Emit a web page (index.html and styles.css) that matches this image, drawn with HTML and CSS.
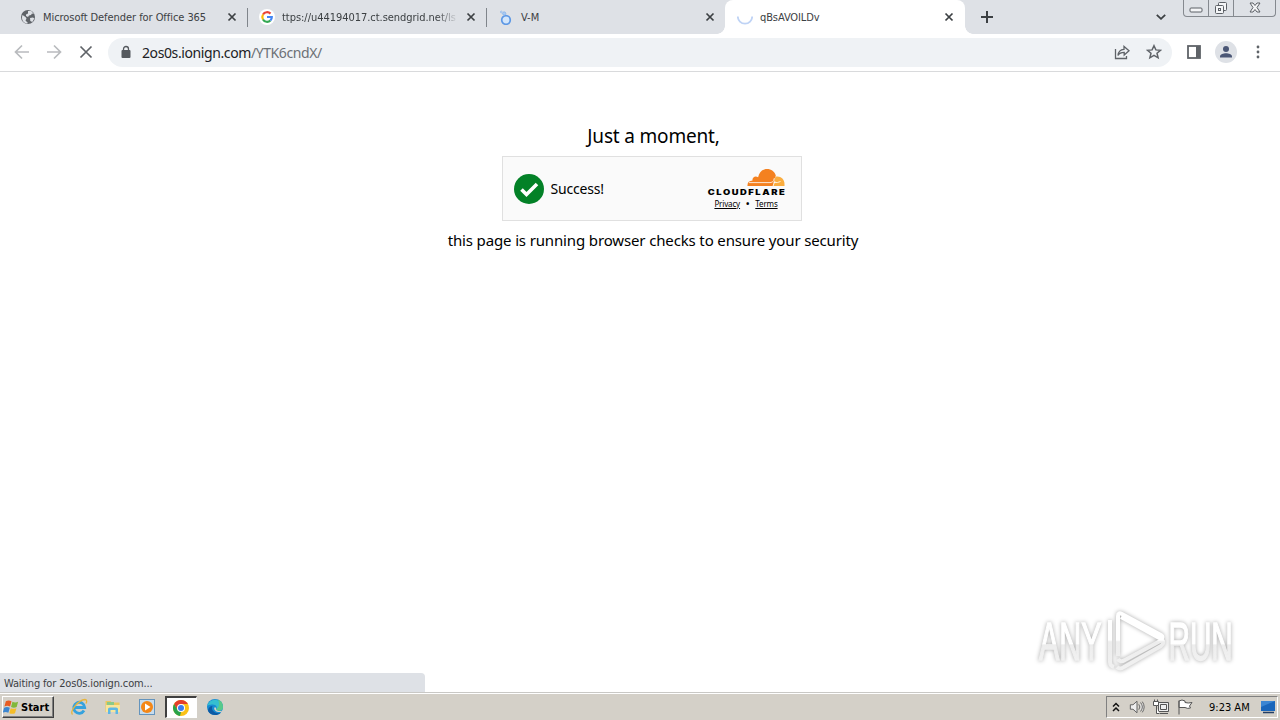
FILE: index.html
```html
<!DOCTYPE html>
<html lang="en">
<head>
  <meta charset="UTF-8" />
  <meta name="viewport" content="width=device-width, initial-scale=1.0" />
  <title>qBsAVOILDv</title>
  <link rel="stylesheet" href="styles.css">
</head>
<body>
  <header class="tab-strip">
    <div class="tab first">
      <svg class="favicon" viewBox="0 0 16 16"><circle cx="8" cy="8" r="7" fill="#5f6368"/><path d="M2.500 6l3 2 1 1.500-1 2L8 14l-1 .6C3 14 1 10 2.500 6zM8 2l3-.3 3 3.300-2-.5-1 1.500-2 .5-1 1.500-2-1 0-1.500 2-1zM10 9l3-.5 1.300 1-2 3.500-2-1z" fill="#dee1e6"/></svg>
      <span class="tab-title t1">Microsoft Defender for Office 365</span>
      <svg class="close" viewBox="0 0 10 10"><path d="M1.500 1.500l7 7M8.500 1.500l-7 7"/></svg>
    </div>
    <div class="tab">
      <svg class="favicon" viewBox="0 0 16 16"><circle cx="8" cy="8" r="8" fill="#fff"/><g fill="none" stroke-width="2.200"><path d="M4 5.500A4.800 4.800 0 0 1 11.500 4.600" stroke="#ea4335"/><path d="M4 5.500a5 5 0 0 0 0 5" stroke="#fbbc05"/><path d="M4 10.500a4.800 4.800 0 0 0 7.400 1" stroke="#34a853"/><path d="M11.400 11.500A5 5 0 0 0 12.800 8H8" stroke="#4285f4"/></g></svg>
      <span class="tab-title t2">ttps://u44194017.ct.sendgrid.net/ls</span>
      <svg class="close" viewBox="0 0 10 10"><path d="M1.500 1.500l7 7M8.500 1.500l-7 7"/></svg>
    </div>
    <div class="tab third">
      <svg class="favicon" viewBox="0 0 16 16" fill="none" stroke="#5d98e5"><circle cx="8" cy="11" r="4.300" fill="#d3e6fb" stroke-width="1.700"/><circle cx="6.200" cy="4.500" r="1.600" fill="#a9cbf4" stroke="#8db8ee"/><circle cx="3.300" cy="3" r=".9" stroke="#98bff0"/></svg>
      <span class="tab-title t3">V-M</span>
      <svg class="close" viewBox="0 0 10 10"><path d="M1.500 1.500l7 7M8.500 1.500l-7 7"/></svg>
    </div>
    <div class="tab active">
      <svg class="favicon" viewBox="0 0 16 16"><path d="M.8 7.500a7.200 7.200 0 0 0 14.400 0" fill="none" stroke="#bfd3f5" stroke-width="1.800"/></svg>
      <span class="tab-title t4">qBsAVOILDv</span>
      <svg class="close" viewBox="0 0 10 10"><path d="M1.500 1.500l7 7M8.500 1.500l-7 7"/></svg>
    </div>
    <svg class="new-tab" viewBox="0 0 12 12"><path d="M6 0v12M0 6h12"/></svg>
    <svg class="tab-search" viewBox="0 0 10 6"><path d="M.8 .8L5 4.800 9.200 .8"/></svg>
    <div class="window-buttons">
      <span><svg width="14" height="6"><rect x="1" y="1" width="12" height="4" rx="1"/></svg></span>
      <span><svg width="14" height="14"><rect x="4.500" y="1.500" width="8" height="8" rx="1"/><rect x="1.500" y="4.500" width="8" height="8" rx="1"/><rect x="4.500" y="7.500" width="2" height="2"/></svg></span>
      <span><svg width="14" height="12"><path d="M2 1h3l2 2.500L9 1h3L9 5.500 12 10H9L7 7.500 5 10H2l3-4.500z"/></svg></span>
    </div>
  </header>

  <div class="toolbar">
    <svg class="nav-icon muted" viewBox="0 0 16 16"><path d="M15 8H2M8 1.500L1.500 8 8 14.500"/></svg>
    <svg class="nav-icon muted" viewBox="0 0 16 16"><path d="M1 8h13M8 1.500L14.500 8 8 14.500"/></svg>
    <svg class="nav-icon" viewBox="0 0 16 16"><path d="M2.500 2.500l11 11M13.500 2.500l-11 11"/></svg>
    <div class="omnibox">
      <svg class="lock" viewBox="0 0 10 14"><rect x=".5" y="5" width="9" height="8" rx="1" fill="#55595e"/><path d="M2.500 5.500V4a2.500 2.500 0 0 1 5 0v1.500" fill="none" stroke="#55595e" stroke-width="1.300"/></svg>
      <span class="url">2os0s.ionign.com<em>/YTK6cndX/</em></span>
      <svg class="share" viewBox="0 0 16 16"><path d="M1.500 5v9.500h11V12M4 11.500c.3-4 2.500-6 6-6.200V2.500L15 6.800 10.200 11V8.400c-3 0-4.900.8-6.200 3.100z"/></svg>
      <svg class="star" viewBox="0 0 16 16"><path d="M8 1.700l1.900 4.200 4.600.4-3.500 3 1.100 4.500L8 11.400l-4.100 2.400L5 9.300l-3.500-3 4.600-.4z"/></svg>
    </div>
    <svg class="side-panel" viewBox="0 0 14 14"><rect x="1" y="1" width="12" height="12" fill="none" stroke="#5f6368" stroke-width="1.800"/><path d="M9 1h4v12H9z" fill="#5f6368"/></svg>
    <svg class="avatar" viewBox="0 0 22 22"><circle cx="11" cy="11" r="11" fill="#dee1e6"/><circle cx="11" cy="8" r="3" fill="#4a5675"/><path d="M5 16.500v-1.200c0-2 3.500-3.100 6-3.100s6 1.100 6 3.100v1.200z" fill="#4a5675"/></svg>
    <svg class="menu" viewBox="0 0 4 14"><circle cx="2" cy="2" r="1.400"/><circle cx="2" cy="7" r="1.400"/><circle cx="2" cy="12" r="1.400"/></svg>
  </div>

  <main>
    <h1>Just a moment,</h1>
    <div class="challenge">
      <svg class="check" viewBox="0 0 30 30"><circle cx="15" cy="15" r="15" fill="#038127"/><path d="M7.500 15.500l5 5L23 10" fill="none" stroke="#fff" stroke-width="3.600"/></svg>
      <span class="success">Success!</span>
      <div class="brand">
        <svg class="cf-logo" viewBox="0 0 78 28">
          <path d="M40.500 17c-.3-3.500 1.700-5.500 5-5.600-.4-3.400 3-5 5.600-3.200C52.300 3 55.500 0 60 0c4.300 0 7.600 2.500 8.800 6.500L66 17z" fill="#f48120"/>
          <path d="M66 17l2.500-9.300c4.500-1.300 9 2 9 7.300v2z" fill="#faad3f"/>
          <path d="M42 13.600h21q3 0 3.600-2l.8-2.500M66.500 13.500h4l3-1M66 17l2-5" fill="none" stroke="#fff" stroke-width=".8"/>
          <text transform="translate(.8 25.700) scale(1.250 1)" textLength="61.500" lengthAdjust="spacing">CLOUDFLARE</text>
        </svg>
        <div class="links"><a>Privacy</a><b>•</b><a>Terms</a></div>
      </div>
    </div>
    <p>this page is running browser checks to ensure your security</p>
    <svg class="watermark" viewBox="0 0 220 80">
      <defs>
        <linearGradient id="fade" gradientUnits="userSpaceOnUse" x1="0" y1="10" x2="0" y2="70"><stop offset=".5" stop-color="#fff"/><stop offset=".53" stop-color="#ededed"/><stop offset="1" stop-color="#f1f1f1"/></linearGradient>
        <linearGradient id="text-fade" gradientUnits="userSpaceOnUse" x1="0" y1="-40" x2="0" y2="0"><stop offset=".6" stop-color="#fff"/><stop offset=".64" stop-color="#ededed"/><stop offset="1" stop-color="#f1f1f1"/></linearGradient>
      </defs>
      <g class="letters"><text transform="translate(8 59.500) scale(.575 1)">ANY</text><text transform="translate(137.500 59.500) scale(.56 1)">RUN</text></g>
      <path class="play" d="M87 56V16q0-4 4-2l39 21q3 2 0 4L90 17M79 20v42q0 4 4 5M86 67q3 3 7 0l37-21q4-3 1-6L94 60q-5 3-7-1"/>
    </svg>
    <div class="status">Waiting for 2os0s.ionign.com...</div>
  </main>

  <footer class="taskbar">
    <button class="start">
      <svg viewBox="0 0 18 16"><path d="M3 2q3-2 6 0L7.500 7.500q-3-1.500-6 0z" fill="#e85c23"/><path d="M10 2.500q3 1.500 6 0L14.500 8q-3 1.500-6 0z" fill="#81b83b"/><path d="M1.200 8.700q3-1.500 6 0L5.700 14q-3-1.500-6 0z" fill="#3c86d0"/><path d="M8.200 9.200q3 1.500 6 0L12.700 14.500q-3 1.500-6 0z" fill="#f5bd28"/></svg>
      <span>Start</span>
    </button>
    <div class="launch">
      <span><svg viewBox="0 0 18 18"><path d="M14 12.500A5.500 5.500 0 1 1 14.700 9.500H5" fill="none" stroke="#35a2de" stroke-width="2.800"/><path d="M2.500 16.500C-.5 13.500 8 2 15 1.500c2 0 2 2 1 4" fill="none" stroke="#e7b53c" stroke-width="1.300"/></svg></span>
      <span><svg viewBox="0 0 18 18"><path d="M1.500 3h5l1 1.500h8V14h-14z" fill="#ecc75d"/><path d="M3 4h7v5H3z" fill="#8bc989"/><path d="M2 7h14v7H2z" fill="#f8e59b"/><path d="M4 16V11q0-1.500 2-1.500h6q2 0 2 1.500v5h-2.500v-4h-5v4z" fill="#5db7e5"/></svg></span>
      <span><svg viewBox="0 0 18 18"><rect x="1.500" y="1.500" width="15" height="15" fill="#c7dced" stroke="#6494bd"/><circle cx="9" cy="9" r="6" fill="#f48717"/><path d="M7 5.500v7L12.500 9z" fill="#fff"/></svg></span>
      <span class="running"><svg viewBox="0 0 18 18"><circle cx="9" cy="9" r="8" fill="#fbc116"/><path d="M2.100 5A8 8 0 0 1 15.900 5H9L5.500 11z" fill="#e43e2b"/><path d="M2.100 5l3.500 6 3.400 2-1 4A8 8 0 0 1 2.100 5z" fill="#29a34a"/><circle cx="9" cy="9" r="4" fill="#fff"/><circle cx="9" cy="9" r="3" fill="#3b7ded"/></svg></span>
      <span><svg viewBox="0 0 18 18"><circle cx="9" cy="9" r="8" fill="#168bd2"/><path d="M1.200 8A8 8 0 0 1 17 9c0 4-5 4.500-7 2.500 2-2 0-5.500-4-5C3.500 6.800 2 7 1.200 8z" fill="#35bfd0"/><path d="M12 1.600A8 8 0 0 1 17 9c0 4-5 4.500-7 2.500 3-2 4-5 2-9.900z" fill="#58c98a"/><path d="M6.500 8c-2 4 2 8 8 7C11 18.500 4 17.500 2 13c0-3 2-5 4.500-5z" fill="#0c5aa5"/><path d="M10 11.500c2 2 5 2 6.500.7l-1 1.600C11 15 7 12 8.500 9.500c1-1 2 .5 1.500 2z" fill="#d4d0c8"/></svg></span>
    </div>
    <div class="tray">
      <svg class="up" viewBox="0 0 8 10"><path d="M1 4.500l3-3 3 3M1 9l3-3 3 3" fill="none" stroke="#111" stroke-width="1.500"/></svg>
      <svg class="tray-icon speaker" viewBox="0 0 18 16"><path d="M1.500 5.500h3L9 1.500v13l-4.500-4h-3zM11 5q2.500 3 0 6M13 3q4 5 0 10M15 2q4 6 0 12"/></svg>
      <svg class="tray-icon network" viewBox="0 0 16 16"><path fill="#eee" d="M5.500 3.500h10v9h-10zM7 14.500h8M7.500 5.500h6v5h-6z"/><path fill="#fff" d="M.5 2.500h5v4h-2v8h3M3.500 6.500h-3v-4M1.500 .5v2M4.500 .5v2"/></svg>
      <svg class="tray-icon flag" viewBox="0 0 16 16"><path fill="#fff" d="M2 1.500v14M2 2q3-2 6 0v1.500q3 1 7 0L12.500 7l1 2q-3 1-5.500-.5H2z"/></svg>
      <span class="clock">9:23 AM</span>
      <svg class="desktop" viewBox="0 0 16 14"><path d="M1 1h14v10H1z" fill="#1a66bb"/><path d="M1 1h14L1 7z" fill="#3c86d3"/><path d="M3 12.500h11" stroke="#233e65" stroke-width="1.500"/></svg>
    </div>
  </footer>
</body>
</html>
```
FILE: styles.css
```css
* { margin: 0; padding: 0; box-sizing: border-box; }
html, body { width: 100%; height: 100%; overflow: hidden; }
body {
  display: flex;
  flex-direction: column;
  background: #fff;
  color: #000;
  font-family: "Noto Sans", sans-serif;
}
svg { display: block; flex: none; }

/* tabs */
.tab-strip {
  display: flex;
  align-items: center;
  height: 34px;
  background: #dee1e6;
}
.tab {
  position: relative;
  display: flex;
  align-items: center;
  width: 239px;
  height: 34px;
  padding: 0 11px 0 11px;
  font: 11px "DejaVu Sans Condensed", "DejaVu Sans", sans-serif;
  color: #3c4043;
}
.tab.first { width: 248px; padding-left: 20px; }
.tab.third { width: 238px; padding-right: 10px; }
.tab:not(.active)::after {
  content: "";
  position: absolute;
  right: 0; top: 8px;
  width: 1px; height: 19px;
  background: #80858b;
}
.tab.third::after { display: none; }
.tab.active {
  width: 240px;
  padding-left: 12px;
  background: #fff;
  border-radius: 8px 8px 0 0;
}
.tab.active::before, .tab.active::after {
  content: "";
  position: absolute;
  bottom: 0; left: -8px;
  width: 8px; height: 8px;
  background: radial-gradient(circle at 0 0, transparent 7.5px, #fff 8px);
}
.tab.active::after {
  left: auto; right: -8px;
  background: radial-gradient(circle at 100% 0, transparent 7.5px, #fff 8px);
}
.favicon { width: 16px; height: 16px; }
.tab-title { margin-left: 7px; white-space: nowrap; }
.t1 { letter-spacing: -0.06px; }
.t2 {
  width: 176px;
  overflow: hidden;
  letter-spacing: -0.04px;
  -webkit-mask-image: linear-gradient(to right, #000 155px, transparent 176px);
}
.t4 { letter-spacing: -0.1px; }
.close {
  width: 10px; height: 10px;
  margin-left: auto;
  stroke: #3c4043; stroke-width: 1.7;
}
.new-tab { width: 12px; height: 12px; margin-left: 16px; stroke: #3c4043; stroke-width: 2; }
.tab-search { width: 10px; height: 6px; margin-left: 163px; fill: none; stroke: #3c4043; stroke-width: 1.8; }
.window-buttons {
  display: flex;
  align-self: flex-start;
  height: 17px;
  margin-left: 17px;
  border: 1px solid #85898f;
  border-top: 0;
  border-radius: 0 0 4px 4px;
}
.window-buttons span { display: flex; justify-content: center; align-items: center; width: 25px; border-right: 1px solid #85898f; }
.window-buttons span:first-child { align-items: flex-end; padding-bottom: 3px; }
.window-buttons span:last-child { width: 41px; border: 0; }
.window-buttons svg { fill: #f4f5f7; stroke: #5c6066; }

/* toolbar */
.toolbar {
  display: flex;
  align-items: center;
  height: 38px;
  padding: 0 0 1px 14px;
  border-bottom: 1px solid #d9dadc;
}
.nav-icon { width: 16px; height: 16px; margin-right: 16px; fill: none; stroke: #5f6368; stroke-width: 1.7; }
.nav-icon.muted { stroke: #b9bbbe; }
.omnibox {
  display: flex;
  align-items: center;
  width: 1064px; height: 29px;
  margin-left: -2px;
  padding: 0 10px 0 13px;
  border-radius: 15px;
  background: #eff2f5;
}
.lock { width: 10px; height: 14px; }
.url { margin: 1px 0 0 11px; font-size: 14px; letter-spacing: -0.4px; color: #202124; }
.url em { font-style: normal; color: #6c7075; }
.share, .star { width: 16px; height: 16px; fill: none; stroke: #5f6368; stroke-width: 1.3; }
.share { margin-left: auto; }
.star { margin-left: 16px; stroke-width: 1.5; }
.side-panel { width: 14px; height: 14px; margin-left: 15px; }
.avatar { width: 22px; height: 22px; margin-left: 14px; }
.menu { width: 4px; height: 14px; margin-left: 19px; fill: #5f6368; }

/* page */
main {
  position: relative;
  flex: 1;
  display: flex;
  flex-direction: column;
  align-items: center;
  padding: 50px 0 0 25px;
}
h1 { height: 28px; margin-left: 2px; font-size: 19px; letter-spacing: -0.18px; line-height: 28px; font-weight: 400; white-space: nowrap; }
.challenge {
  display: flex;
  align-items: center;
  width: 300px; height: 65px;
  margin: 6px 2px 0 0;
  padding: 0 16px 0 11px;
  border: 1px solid #e0e0e0;
  background: #fafafa;
}
.check { width: 30px; height: 30px; }
.success { margin-left: 7px; font-size: 14px; letter-spacing: -0.2px; }
.brand { margin-left: auto; }
.cf-logo { width: 78px; height: 28px; overflow: visible; }
.cf-logo text { font: 900 7.5px Inter, sans-serif; }
.links { display: flex; justify-content: center; gap: 6px; margin: 2px 0 0 1px; font-size: 8px; line-height: 10px; letter-spacing: -0.15px; }
.links a { text-decoration: underline; }
.links b { font-size: 9px; }
main p { margin: 8px 0 0 1px; font-size: 15px; letter-spacing: -0.14px; line-height: 22px; white-space: nowrap; }
.watermark { position: absolute; left: 1031px; top: 528px; width: 220px; height: 80px; filter: drop-shadow(0 0 2px #aaa); }
.letters { font: 53px "Liberation Sans", sans-serif; fill: url(#text-fade); stroke: url(#text-fade); stroke-width: 1.5; }
.play { fill: none; stroke: url(#fade); stroke-width: 4; stroke-linejoin: round; }
.status {
  position: absolute;
  left: 0; bottom: 0;
  width: 425px; height: 19px;
  padding-left: 4px;
  border-radius: 0 4px 0 0;
  background: #dee1e6;
  color: #3c4043;
  font: 11px/21px "DejaVu Sans Condensed", "DejaVu Sans", sans-serif;
  letter-spacing: -0.15px;
}

/* taskbar */
.taskbar {
  display: flex;
  align-items: center;
  height: 28px;
  padding: 1px 2px 0;
  border-top: 1px solid #c9c8c5;
  box-shadow: inset 0 1px #fff;
  background: #d4d0c8;
}
.start {
  display: flex;
  align-items: center;
  gap: 1px;
  width: 52px; height: 22px;
  border: 1px solid;
  border-color: #fff #404040 #404040 #fff;
  box-shadow: inset -1px -1px #808080;
  background: #d4d0c8;
  color: #000;
  font: bold 11px "DejaVu Sans Condensed", "DejaVu Sans", sans-serif;
}
.start svg { width: 17px; height: 16px; }
.launch { display: flex; margin-left: 8px; }
.launch span { display: flex; align-items: center; justify-content: center; width: 34px; height: 22px; }
.launch svg { width: 18px; height: 18px; }
.launch .running { width: 32px; margin: 0 1px; padding-right: 1px; border: 1px solid #fff; border-top: 2px solid #404040; border-left: 2px solid #404040; background: #fff; }
.tray {
  display: flex;
  align-items: center;
  width: 172px; height: 22px;
  margin-left: auto;
  padding-left: 5px;
  border: 1px solid;
  border-color: #808080 #fff #fff #808080;
}
.up { width: 8px; height: 10px; }
.tray-icon { width: 16px; height: 16px; fill: #eee; stroke: #555; stroke-width: 1; }
.speaker { margin-left: 9px; }
.network { margin-left: 8px; }
.flag { margin-left: 8px; }
.clock { margin-left: 16px; font: 11px "DejaVu Sans Condensed", sans-serif; white-space: nowrap; }
.desktop { width: 16px; height: 14px; margin: 0 1px 0 auto; }
```
